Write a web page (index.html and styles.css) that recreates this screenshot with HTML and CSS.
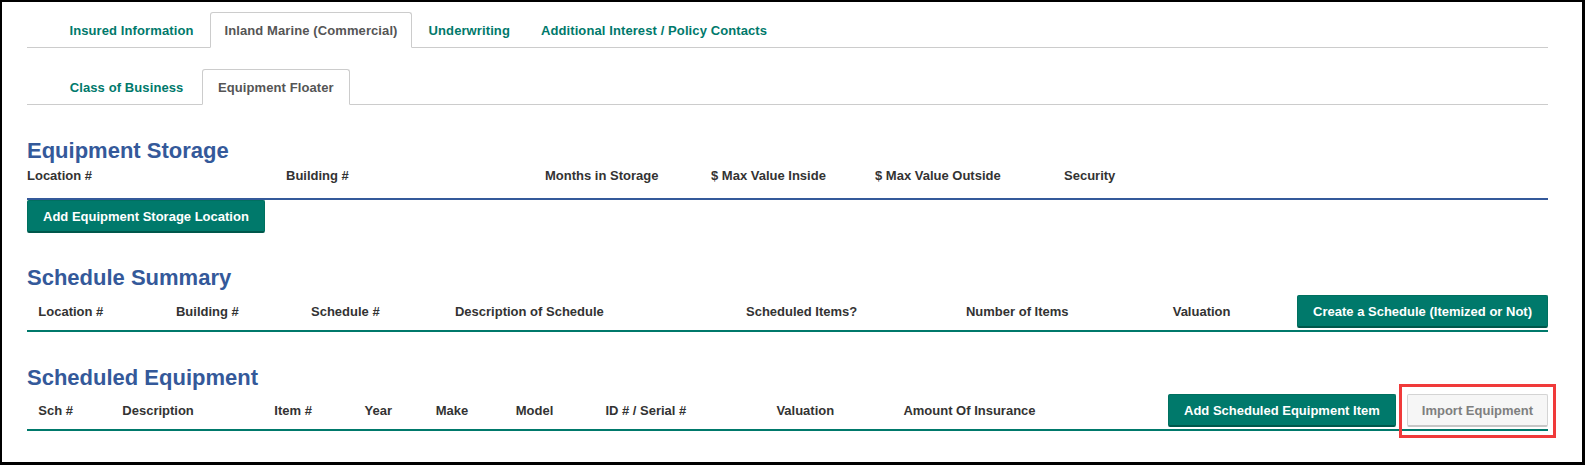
FILE: index.html
```html
<!DOCTYPE html>
<html>
<head>
<meta charset="utf-8">
<link rel="stylesheet" href="styles.css">
</head>
<body>
<div class="frame">
  <div class="content">
    <ul class="tabs tabs-main">
      <li class="tab">Insured Information</li>
      <li class="tab active">Inland Marine (Commercial)</li>
      <li class="tab">Underwriting</li>
      <li class="tab">Additional Interest / Policy Contacts</li>
    </ul>
    <ul class="tabs tabs-sub">
      <li class="tab">Class of Business</li>
      <li class="tab active">Equipment Floater</li>
    </ul>

    <section class="storage">
      <h2 class="heading">Equipment Storage</h2>
      <div class="head-row storage-row">
        <span>Location #</span>
        <span>Building #</span>
        <span>Months in Storage</span>
        <span>$ Max Value Inside</span>
        <span>$ Max Value Outside</span>
        <span>Security</span>
      </div>
      <button class="btn btn-teal">Add Equipment Storage Location</button>
    </section>

    <section class="summary">
      <h2 class="heading">Schedule Summary</h2>
      <div class="head-row summary-row">
        <span>Location #</span>
        <span>Building #</span>
        <span>Schedule #</span>
        <span>Description of Schedule</span>
        <span>Scheduled Items?</span>
        <span>Number of Items</span>
        <span>Valuation</span>
        <div class="actions">
          <button class="btn btn-teal">Create a Schedule (Itemized or Not)</button>
        </div>
      </div>
    </section>

    <section class="equipment">
      <h2 class="heading">Scheduled Equipment</h2>
      <div class="head-row equipment-row">
        <span>Sch #</span>
        <span>Description</span>
        <span>Item #</span>
        <span>Year</span>
        <span>Make</span>
        <span>Model</span>
        <span>ID # / Serial #</span>
        <span>Valuation</span>
        <span>Amount Of Insurance</span>
        <div class="actions">
          <button class="btn btn-teal">Add Scheduled Equipment Item</button>
          <span class="import-wrap">
            <button class="btn btn-light">Import Equipment</button>
            <span class="highlight"></span>
          </span>
        </div>
      </div>
    </section>
  </div>
</div>
</body>
</html>
```

FILE: styles.css
```css
* { box-sizing: border-box; }
html, body { margin: 0; padding: 0; background: #fff; }
body {
  font-family: "Liberation Sans", Arial, sans-serif;
  font-size: 13px;
  color: #333;
}
.frame {
  width: 1585px;
  height: 465px;
  border-style: solid;
  border-color: #000;
  border-width: 2px 3px 3px 2px;
  overflow: hidden;
}
.content {
  margin-left: 25px;
  width: 1521px;
  padding-top: 10px;
}
.tabs {
  list-style: none;
  margin: 0;
  display: flex;
  border-bottom: 1px solid #ccc;
}
.tabs-main { padding: 0 0 0 28px; }
.tabs-sub { margin-top: 21px; padding: 0 0 0 26.5px; }
.tab {
  font-weight: bold;
  color: #00796b;
  letter-spacing: 0.1px;
  padding: 8px 13.5px 7px;
  line-height: 19px;
  margin-right: 2px;
  margin-bottom: -1px;
  border: 1px solid transparent;
  border-radius: 3px 3px 0 0;
}
.tabs-sub .tab { padding-left: 15.25px; padding-right: 15.25px; }
.tab.active {
  color: #555;
  background: #fff;
  border-color: #ccc #ccc #fff;
}
.heading {
  margin: 34px 0 0;
  font-size: 22px;
  line-height: 24px;
  font-weight: bold;
  color: #34599a;
}
.head-row {
  display: grid;
  align-items: center;
  font-weight: bold;
  color: #333;
}
.storage-row {
  grid-template-columns: 259px 259px 166px 164px 189px 1fr;
  padding: 5px 0 15px;
  border-bottom: 2px solid #34599a;
}
.summary .heading { margin-top: 33px; }
.summary-row {
  grid-template-columns: 137.7px 135px 144px 291px 220px 206.7px 1fr auto;
  padding: 5px 0 2px 11.3px;
  border-bottom: 2px solid #00796b;
}
.equipment .heading { margin-top: 34px; }
.equipment-row {
  grid-template-columns: 84px 152px 90.3px 71.2px 80px 89.6px 171px 127px 1fr auto;
  padding: 4px 0 2px 11.3px;
  border-bottom: 2px solid #00796b;
}
.actions {
  display: flex;
  align-items: flex-start;
  gap: 11px;
}
.btn {
  display: block;
  font-family: "Liberation Sans", Arial, sans-serif;
  font-size: 13px;
  font-weight: bold;
  line-height: 18px;
  border-radius: 2px;
  cursor: pointer;
  margin: 0;
}
.btn-teal {
  background: #00796b;
  color: #fff;
  border: 1px solid #00705f;
  border-bottom: 2px solid #00574b;
  padding: 7px 15px 5px;
}
.btn-light {
  background: #f6f6f6;
  color: #7f7f7f;
  border: 1px solid #d4d4d4;
  border-bottom: 2px solid #c6c6c6;
  padding: 7px 14px 5px;
}
.import-wrap { position: relative; display: block; }
.highlight {
  position: absolute;
  left: -8px;
  right: -8px;
  top: -10px;
  bottom: -11px;
  border: 3px solid #f03a3a;
  pointer-events: none;
}
```
